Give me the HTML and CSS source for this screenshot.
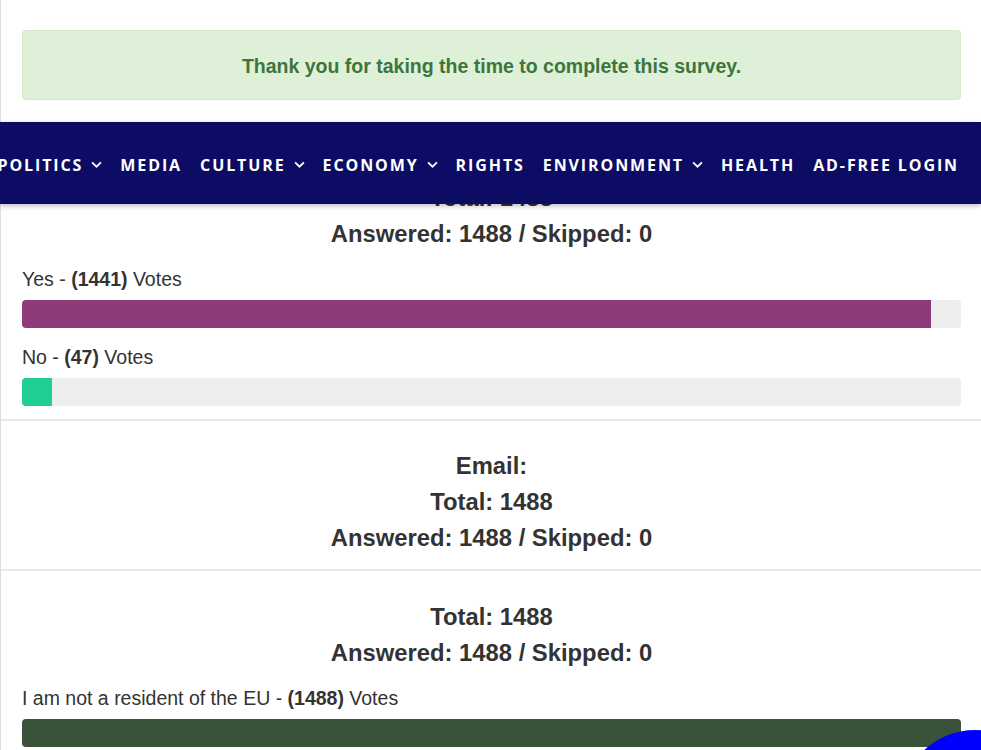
FILE: index.html
```html
<!DOCTYPE html>
<html lang="en">
<head>
    <meta charset="UTF-8">
    <meta name="viewport" content="width=device-width, initial-scale=1.0">
    <title>Survey results</title>
    <link rel="stylesheet" href="styles.css">
</head>
<body>
    <div class="page">
        <div class="thanks">Thank you for taking the time to complete this survey.</div>

        <div class="results">
            <section class="question">
                <h4>Total: 1488</h4>
                <h4>Answered: 1488 / Skipped: 0</h4>
                <div class="options">
                    <p class="opt-label">Yes - <b>(1441)</b> Votes</p>
                    <div class="bar"><div class="fill fill-yes" style="width: 96.84%"></div></div>
                    <p class="opt-label">No - <b>(47)</b> Votes</p>
                    <div class="bar"><div class="fill fill-no" style="width: 3.16%"></div></div>
                </div>
            </section>

            <section class="question">
                <h4>Email:</h4>
                <h4>Total: 1488</h4>
                <h4>Answered: 1488 / Skipped: 0</h4>
            </section>

            <section class="question">
                <h4>Total: 1488</h4>
                <h4>Answered: 1488 / Skipped: 0</h4>
                <div class="options">
                    <p class="opt-label">I am not a resident of the EU - <b>(1488)</b> Votes</p>
                    <div class="bar"><div class="fill fill-eu" style="width: 100%"></div></div>
                </div>
            </section>
        </div>
    </div>

    <nav class="topnav">
        <a class="nav-link" href="#">Politics<svg class="chev" viewBox="0 0 10 6"><path d="M1 1l4 4 4-4"/></svg></a>
        <a class="nav-link" href="#">Media</a>
        <a class="nav-link" href="#">Culture<svg class="chev" viewBox="0 0 10 6"><path d="M1 1l4 4 4-4"/></svg></a>
        <a class="nav-link" href="#">Economy<svg class="chev" viewBox="0 0 10 6"><path d="M1 1l4 4 4-4"/></svg></a>
        <a class="nav-link" href="#">Rights</a>
        <a class="nav-link" href="#">Environment<svg class="chev" viewBox="0 0 10 6"><path d="M1 1l4 4 4-4"/></svg></a>
        <a class="nav-link" href="#">Health</a>
        <a class="nav-link" href="#">Ad-free login</a>
    </nav>

    <div class="chat-bubble"></div>
</body>
</html>
```

FILE: styles.css
```css
* {
    box-sizing: border-box;
}

body {
    margin: 0;
    font-family: "Liberation Sans", Arial, sans-serif;
    color: #333;
    background: #fff;
    overflow: hidden;
}

.page {
    border-left: 1px solid #ddd;
    min-height: 100vh;
    padding-top: 30px;
}

.thanks {
    margin: 0 20px 52px 21px;
    padding: 25px 15px 23px;
    line-height: 20px;
    font-size: 19.5px;
    font-weight: bold;
    text-align: center;
    color: #3c763d;
    background-color: #dff0d8;
    border: 1px solid #d6e9c6;
    border-radius: 4px;
}

.question {
    padding: 22px 20px 7px 21px;
    border-bottom: 2px solid #e8e8e8;
}

.question + .question {
    padding-top: 21px;
}

.question:last-child {
    padding-top: 22px;
}

h4 {
    margin: 12px 0;
    font-size: 23.8px;
    line-height: 24px;
    font-weight: bold;
    text-align: center;
}

.options {
    padding-top: 8px;
}

.opt-label {
    margin: 0 0 9px;
    font-size: 19.5px;
    line-height: 24px;
    padding-top: 1px;
}

.bar {
    height: 28px;
    margin-bottom: 16px;
    background-color: #eee;
    border-radius: 4px;
    overflow: hidden;
}

.bar:last-child {
    margin-bottom: 6px;
}

.fill {
    height: 100%;
}

.fill-yes {
    background-color: #8f3a7b;
}

.fill-no {
    background-color: #1ecf91;
}

.fill-eu {
    background-color: #3a5239;
}

.topnav {
    position: absolute;
    top: 122px;
    left: 0;
    right: 0;
    height: 82px;
    display: flex;
    align-items: center;
    justify-content: flex-end;
    gap: 18px;
    padding: 3px 22px 0 0;
    overflow: hidden;
    background-color: #0c0c64;
    box-shadow: 0 2px 5px rgba(0, 0, 0, 0.25);
}

.nav-link {
    flex-shrink: 0;
    display: flex;
    align-items: center;
    font-family: "Open Sans", sans-serif;
    font-size: 16px;
    font-weight: 700;
    letter-spacing: 1.9px;
    text-transform: uppercase;
    color: #fff;
    text-decoration: none;
    white-space: nowrap;
}

.chev {
    width: 11px;
    height: 7px;
    margin-left: 8px;
    fill: none;
    stroke: #fff;
    stroke-width: 1.6;
}

.chat-bubble {
    position: fixed;
    right: -69px;
    bottom: -130px;
    width: 150px;
    height: 150px;
    border-radius: 50%;
    background-color: #0000ff;
}
```
